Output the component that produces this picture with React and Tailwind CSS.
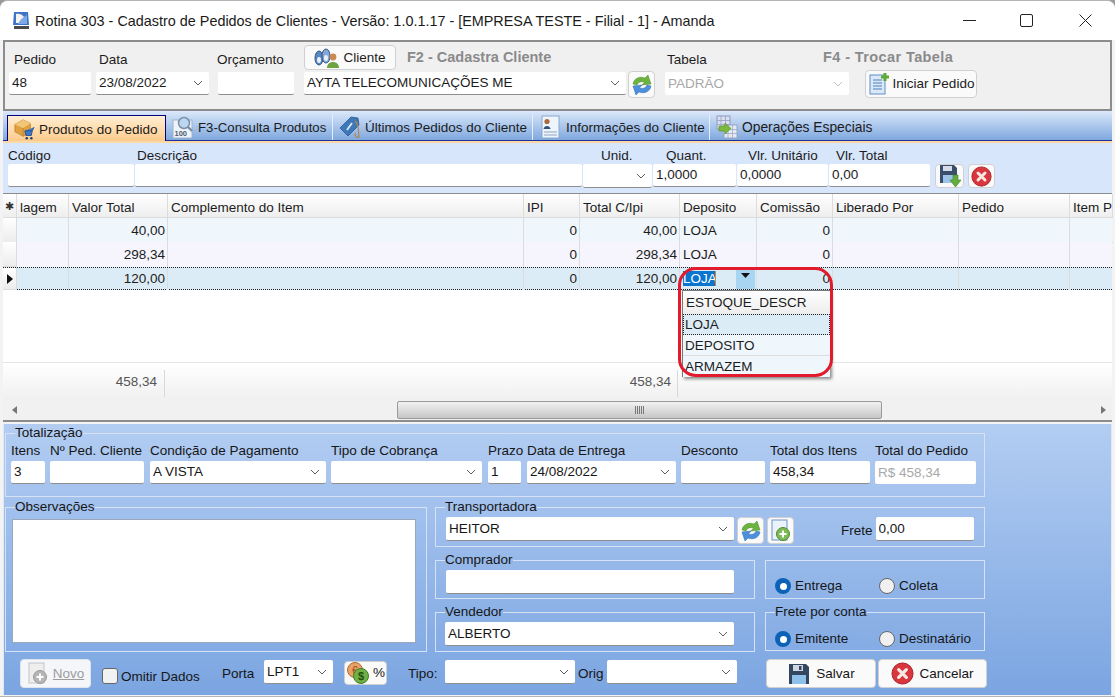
import React from "react";

const Chevron = ({ color = "#5f5f5f" }) => (
  <svg width="10" height="6" viewBox="0 0 10 6" className="shrink-0">
    <path d="M1 1 L5 5 L9 1" fill="none" stroke={color} strokeWidth="1" />
  </svg>
);

const Refresh = ({ size = 24 }) => (
  <svg width={size} height={size} viewBox="0 0 24 24">
    <path d="M3 11 C4 5 10 3 15 5 L18 2 L21 11 L12 12 L14.5 9 C11 8 8 9 7 12 Z" fill="#6db33f" stroke="#4b8a2a" strokeWidth=".5" />
    <path d="M21 13 C20 19 14 21 9 19 L6 22 L3 13 L12 12 L9.5 15 C13 16 16 15 17 12 Z" fill="#4c8fdc" stroke="#2e69ad" strokeWidth=".5" />
  </svg>
);

const RedX = ({ size = 22 }) => (
  <svg width={size} height={size} viewBox="0 0 24 24">
    <circle cx="12" cy="12" r="11" fill="#d9363e" stroke="#a51f27" strokeWidth="1" />
    <path d="M8 8 L16 16 M16 8 L8 16" stroke="#f6e9e4" strokeWidth="3.4" strokeLinecap="round" />
  </svg>
);

const Floppy = ({ size = 24 }) => (
  <svg width={size} height={size} viewBox="0 0 24 24">
    <path d="M2 2 H19 L22 5 V22 H2 Z" fill="#33475e" />
    <rect x="6" y="3" width="10" height="6" fill="#cfd8e2" />
    <rect x="12" y="4" width="2.5" height="4" fill="#33475e" />
    <rect x="5" y="13" width="14" height="9" fill="#8fc0ea" />
  </svg>
);

const SaveGreen = () => (
  <svg width="24" height="24" viewBox="0 0 24 24">
    <path d="M2 1 H16 L19 4 V19 H2 Z" fill="#3a4f6c" />
    <rect x="5" y="2" width="9" height="5" fill="#d6dde6" />
    <rect x="5" y="11" width="10" height="8" fill="#9cc4e8" />
    <path d="M15 11 H20 V16 H23 L17.5 23 L12 16 H15 Z" fill="#63ad3c" stroke="#3f7f22" strokeWidth=".6" />
  </svg>
);

const DocPlus = ({ muted }) => (
  <svg width="22" height="24" viewBox="0 0 22 24">
    <rect x="2" y="1" width="15" height="20" fill={muted ? "#eeeeee" : "#eaf2fb"} stroke={muted ? "#c4c4c4" : "#6f94c4"} />
    <circle cx="13" cy="15" r="6.5" fill={muted ? "#b5b5b5" : "#7dbb55"} stroke={muted ? "#9a9a9a" : "#4f8a2f"} />
    <path d="M13 11.5 V18.5 M9.5 15 H16.5" stroke="#ffffff" strokeWidth="2" />
  </svg>
);

const PageAdd = () => (
  <svg width="24" height="24" viewBox="0 0 24 24">
    <rect x="2" y="3" width="15" height="19" fill="#dbe8f8" stroke="#5f8cc6" />
    <path d="M5 8 H14 M5 11 H14 M5 14 H14 M5 17 H14" stroke="#4f7fb9" strokeWidth="1.2" />
    <path d="M17 1 V9 M13 5 H21" stroke="#5cab35" strokeWidth="3" />
  </svg>
);

const BoxCart = () => (
  <svg width="22" height="24" viewBox="0 0 24 24">
    <path d="M2 7 L11 2 L19 6 V15 L11 20 L2 15 Z" fill="#e0a040" stroke="#a8701f" strokeWidth=".6" />
    <path d="M2 7 L11 11 L19 6 L11 2 Z" fill="#f2c778" />
    <path d="M11 11 V20" stroke="#a8701f" strokeWidth=".6" />
    <path d="M13 14 H21 L23 10 M13 14 L14 19 H20 L21 14" fill="#3f78c4" stroke="#1f4f94" strokeWidth="1" />
    <circle cx="15" cy="22" r="1.4" fill="#1f3f6f" />
    <circle cx="20" cy="22" r="1.4" fill="#1f3f6f" />
  </svg>
);

const Search100 = () => (
  <svg width="22" height="24" viewBox="0 0 22 24">
    <rect x="1" y="5" width="19" height="18" fill="#eef3fa" stroke="#9fb2cc" />
    <circle cx="12" cy="8" r="5.5" fill="#bcd6f2" stroke="#7a8ea8" strokeWidth="1.5" />
    <path d="M16 12 L20 16" stroke="#7a8ea8" strokeWidth="2.4" />
    <text x="2.5" y="21" fontSize="7.5" fontWeight="700" fill="#4e5d70" fontFamily="Liberation Sans, sans-serif">100</text>
  </svg>
);

const PriceTag = () => (
  <svg width="22" height="24" viewBox="0 0 22 24">
    <path d="M1 13 L12 2 L19 3 L20 10 L9 21 Z" fill="#3f78b8" stroke="#234f82" strokeWidth=".7" />
    <path d="M8 15 L13 8" stroke="#dce9f7" strokeWidth="1.8" />
    <path d="M16 6 C21 10 19 18 20 22 C18 23 16 22 16 18" fill="none" stroke="#b7854c" strokeWidth="1.2" />
  </svg>
);

const PersonCard = () => (
  <svg width="19" height="24" viewBox="0 0 19 24">
    <rect x="1" y="1" width="17" height="22" fill="#eef4fb" stroke="#8aa8cc" />
    <circle cx="6" cy="6.5" r="2.6" fill="#a86a3c" />
    <path d="M2.5 14 C3 10 9 10 9.5 14 Z" fill="#33507a" />
    <path d="M3 17 H16 M3 20 H16" stroke="#8ca6c4" strokeWidth="1.2" />
  </svg>
);

const GridArrow = () => (
  <svg width="22" height="24" viewBox="0 0 22 24">
    <rect x="1" y="1" width="13" height="13" fill="#d9dfec" stroke="#8b9ac0" />
    <path d="M5 1 V14 M9.5 1 V14 M1 5.5 H14 M1 9.5 H14" stroke="#8b9ac0" strokeWidth=".7" />
    <rect x="8" y="10" width="13" height="13" fill="#e4e9f2" stroke="#98a6c4" />
    <path d="M12 10 V23 M16.5 10 V23 M8 14.5 H21 M8 18.5 H21" stroke="#98a6c4" strokeWidth=".7" />
    <path d="M3 11 H9 V8 L15 13.5 L9 19 V16 H3 Z" fill="#7cba3f" stroke="#558a24" strokeWidth=".6" />
  </svg>
);

const Binoculars = () => (
  <svg width="26" height="22" viewBox="0 0 26 22">
    <ellipse cx="5" cy="11" rx="4" ry="7" fill="#5b87c0" stroke="#2f5688" />
    <ellipse cx="12" cy="9" rx="4" ry="7" fill="#84a9d6" stroke="#2f5688" />
    <ellipse cx="5" cy="13" rx="2" ry="3" fill="#e8f0fa" />
    <ellipse cx="12" cy="11" rx="2" ry="3" fill="#e8f0fa" />
    <circle cx="19" cy="10" r="3.4" fill="#c98a55" />
    <path d="M13 21 C13 13 25 13 25 21 Z" fill="#6da341" />
  </svg>
);

const Coins = () => (
  <svg width="24" height="24" viewBox="0 0 24 24">
    <circle cx="9" cy="9" r="7.5" fill="#e6a26a" stroke="#b26a30" />
    <text x="6" y="12.5" fontSize="10" fill="#9a4d18" fontFamily="Liberation Sans, sans-serif">€</text>
    <circle cx="15" cy="15" r="7.5" fill="#70b044" stroke="#3f7f22" />
    <text x="12" y="19" fontSize="11" fontWeight="700" fill="#20500f" fontFamily="Liberation Sans, sans-serif">$</text>
  </svg>
);

const Box = ({ className = "", value, chevron, muted }) => (
  <div className={`flex items-center bg-white border-b border-[#8e8e8e] rounded-[2px] pl-[3px] pr-[6px] shrink-0 ${className}`}>
    <span className={`flex-1 whitespace-nowrap overflow-hidden ${muted ? "text-[#a8a8a8]" : ""}`}>{value}</span>
    {chevron && <Chevron color={muted ? "#c0c0c0" : "#5f5f5f"} />}
  </div>
);

const IconButton = ({ className = "", children }) => (
  <div className={`flex items-center justify-center bg-[#fafafa] border border-[#d0d0d0] rounded-[4px] shrink-0 ${className}`}>
    {children}
  </div>
);

const Legend = ({ children }) => <legend className="ml-[9px] leading-[16px]">{children}</legend>;

const Radio = ({ className = "", label, checked }) => (
  <div className={`flex items-center gap-[4px] ${className}`}>
    {checked ? (
      <span className="w-[16px] h-[16px] rounded-full bg-[#0b62b6] flex items-center justify-center">
        <span className="w-[7px] h-[7px] rounded-full bg-white" />
      </span>
    ) : (
      <span className="w-[16px] h-[16px] rounded-full bg-[#f0f0f0] border border-[#666666]" />
    )}
    <span>{label}</span>
  </div>
);

const Col = ({ className = "", label, children }) => (
  <div className={`flex flex-col shrink-0 ${className}`}>
    <span className="leading-[16px] h-[18px] whitespace-nowrap">{label}</span>
    {children}
  </div>
);

const Tab = ({ className = "", icon, label }) => (
  <div className={`flex items-center h-[26px] border-r border-[#e4eefb] shrink-0 whitespace-nowrap ${className}`}>
    {icon}
    <span className="mt-[2px]">{label}</span>
  </div>
);

const headers = ["lagem", "Valor Total", "Complemento do Item", "IPI", "Total C/Ipi", "Deposito", "Comissão", "Liberado Por", "Pedido", "Item Pe"];
const gridCols = "grid grid-cols-[14px_52px_99px_356px_56px_100px_77px_76px_126px_111px_43px]";

const Row = ({ className = "", total, withIpi, cellBorder = "border-b border-[#dcdcdc]", marker, editing, pad = "" }) => {
  const cell = `border-r border-[#dcdcdc] ${cellBorder} ${pad}`;
  return (
    <div className={`${gridCols} ${className}`}>
      <div className="flex items-center justify-center bg-gradient-to-b from-white to-[#ececec] border-r border-b border-[#dcdcdc]">{marker}</div>
      <div className={cell} />
      <div className={`${cell} text-right pr-[2px]`}>{total}</div>
      <div className={cell} />
      <div className={`${cell} text-right pr-[2px]`}>0</div>
      <div className={`${cell} text-right pr-[2px]`}>{withIpi}</div>
      {editing ? (
        <div className={`${cell} flex items-start pl-[3px] relative`}>
          <span className="bg-[#0a74cf] text-white border-r border-[#e8821e] mt-[3px] leading-[15px] w-[33px] overflow-hidden">LOJA</span>
          <span className="absolute right-[1px] top-0 w-[19px] h-[21px] bg-[#a8d6f2] flex items-center justify-center pb-[6px]">
            <svg width="9" height="5" viewBox="0 0 9 5"><path d="M0 0 H9 L4.5 5 Z" fill="#111111" /></svg>
          </span>
        </div>
      ) : (
        <div className={`${cell} pl-[3px]`}>LOJA</div>
      )}
      <div className={`${cell} text-right pr-[2px]`}>0</div>
      <div className={cell} />
      <div className={cell} />
      <div className={cellBorder} />
    </div>
  );
};

export default function App() {
  return (
    <div className="w-[1115px] h-[697px] overflow-hidden bg-[#9a9a9a] text-[#1c1c1c] text-[13.5px] leading-[22px] font-['Liberation_Sans',sans-serif]">
      <div className="h-full flex flex-col bg-[#f3f3f3] rounded-t-[8px] border-t border-b border-[#b5b5b5]">
        {/* title bar */}
        <div className="h-[39px] shrink-0 flex items-center bg-white rounded-t-[8px] pl-[11px] text-[14.4px] text-[#1a1a1a]">
          <svg width="20" height="21" viewBox="0 0 20 21" className="shrink-0">
            <path d="M3 2 H17 L18 15 H2 Z" fill="#3f74c8" />
            <path d="M5 4 C10 3 14 6 15 13 H5 Z" fill="#f4f4ee" />
            <path d="M7 14 C10 8 13 7 16 5 V14 Z" fill="#7fa8e4" />
            <rect x="3" y="16" width="15" height="3" fill="#4a4a4a" />
          </svg>
          <span className="ml-[4px] whitespace-nowrap">Rotina 303 - Cadastro de Pedidos de Clientes - Versão: 1.0.1.17 - [EMPRESA TESTE - Filial - 1] - Amanda</span>
          <div className="ml-auto flex items-center">
            <svg width="13" height="13" viewBox="0 0 13 13"><path d="M0 6.5 H13" stroke="#222222" /></svg>
            <svg width="13" height="13" viewBox="0 0 13 13" className="ml-[44px]"><rect x=".5" y=".5" width="12" height="12" rx="1.5" fill="none" stroke="#222222" /></svg>
            <svg width="13" height="13" viewBox="0 0 13 13" className="ml-[46px] mr-[23px]"><path d="M.5 .5 L12.5 12.5 M12.5 .5 L.5 12.5" stroke="#222222" /></svg>
          </div>
        </div>

        <div className="flex-1 flex flex-col mx-[3px] min-h-0">
          {/* header */}
          <div className="h-[71px] shrink-0 border-2 border-[#8c8c8c] bg-[#f0f0f0]">
            <div className="h-[28px] flex items-start pl-[9px] pt-[3px]">
              <span className="w-[85px] mt-[7px] leading-[16px]">Pedido</span>
              <span className="w-[118px] mt-[7px] leading-[16px]">Data</span>
              <span className="w-[87px] mt-[7px] leading-[16px]">Orçamento</span>
              <IconButton className="w-[92px] h-[25px] gap-[3px]"><Binoculars /><span>Cliente</span></IconButton>
              <span className="ml-[11px] w-[260px] mt-[4px] leading-[16px] text-[14.5px] font-bold text-[#8a8a8a] whitespace-nowrap">F2 - Cadastra Cliente</span>
              <span className="w-[156px] mt-[7px] leading-[16px]">Tabela</span>
              <span className="mt-[4px] leading-[16px] text-[14.5px] tracking-[0.4px] font-bold text-[#8a8a8a] whitespace-nowrap">F4 - Trocar Tabela</span>
            </div>
            <div className="flex items-start pl-[4px]">
              <Box className="w-[82px] h-[23px] mt-[2px]" value="48" />
              <Box className="w-[113px] h-[23px] mt-[2px] ml-[5px]" value="23/08/2022" chevron />
              <Box className="w-[76px] h-[23px] mt-[2px] ml-[9px]" />
              <Box className="w-[322px] h-[23px] mt-[2px] ml-[10px] pl-[1px]" value="AYTA TELECOMUNICAÇÕES ME" chevron />
              <IconButton className="w-[27px] h-[27px] mt-[1px] ml-[2px]"><Refresh /></IconButton>
              <Box className="w-[184px] h-[23px] mt-[2px] ml-[10px] border-b-0 bg-[#f8f8f8]" value="PADRÃO" chevron muted />
              <IconButton className="w-[112px] h-[28px] ml-[16px] gap-[1px]"><PageAdd /><span>Iniciar Pedido</span></IconButton>
            </div>
          </div>

          {/* tabs */}
          <div className="h-[32px] shrink-0 flex flex-col">
            <div className="h-[30px] shrink-0 flex items-end bg-gradient-to-b from-[#dbe8fa] to-[#7fa8de] border-b border-[#1c2f9c]">
              <div className="flex items-center gap-[4px] ml-[4px] w-[159px] h-[26px] -mb-[1px] pl-[5px] bg-gradient-to-b from-[#ffeed2] to-[#fdcb8b] border border-b-0 border-[#000080] shrink-0 whitespace-nowrap">
                <BoxCart />
                <span className="mt-[2px]">Produtos do Pedido</span>
              </div>
              <Tab className="w-[167px] pl-[6px] gap-[4px] text-[13.2px]" icon={<Search100 />} label="F3-Consulta Produtos" />
              <Tab className="w-[200px] pl-[6px] gap-[4px]" icon={<PriceTag />} label="Últimos Pedidos do Cliente" />
              <Tab className="w-[177px] pl-[8px] gap-[6px]" icon={<PersonCard />} label="Informações do Cliente" />
              <Tab className="pl-[6px] gap-[4px] border-r-0 text-[13.8px]" icon={<GridArrow />} label="Operações Especiais" />
            </div>
            <div className="h-[2px] bg-[#fbd9a4]" />
          </div>

          {/* item entry */}
          <div className="h-[51px] shrink-0 bg-[#d7e6fb] border-b border-[#8c8c8c]">
            <div className="h-[21px] flex items-end pl-[5px] leading-[16px]">
              <span className="w-[129px]">Código</span>
              <span className="w-[464px]">Descrição</span>
              <span className="w-[65px]">Unid.</span>
              <span className="w-[82px]">Quant.</span>
              <span className="w-[88px]">Vlr. Unitário</span>
              <span>Vlr. Total</span>
            </div>
            <div className="flex items-start pl-[5px]">
              <Box className="w-[126px] h-[23px]" />
              <Box className="w-[447px] h-[23px] ml-[1px]" />
              <Box className="w-[69px] h-[24px] ml-[1px]" chevron />
              <Box className="w-[83px] h-[23px] ml-[1px]" value="1,0000" />
              <Box className="w-[91px] h-[23px] ml-[1px]" value="0,0000" />
              <Box className="w-[101px] h-[23px] ml-[1px]" value="0,00" />
              <IconButton className="w-[29px] h-[24px] ml-[5px]"><SaveGreen /></IconButton>
              <IconButton className="w-[27px] h-[24px] ml-[4px]"><RedX size={21} /></IconButton>
            </div>
          </div>

          {/* grid */}
          <div className="h-[228px] shrink-0 flex flex-col bg-white border-b-2 border-[#8c8c8c] relative">
            <div className={`${gridCols} h-[24px] bg-gradient-to-b from-white to-[#ededed]`}>
              <div className="flex items-center justify-center border-r border-b border-[#dcdcdc] text-[#333333] text-[11px]">✱</div>
              {headers.map((h, i) => (
                <div key={i} className="pl-[3px] pt-[3px] border-r border-b border-[#dcdcdc] whitespace-nowrap overflow-hidden">{h}</div>
              ))}
            </div>
            <Row className="h-[24px] bg-[#eff7fd]" total="40,00" withIpi="40,00" pad="pt-[2px]" />
            <Row className="h-[25px] bg-[#f6f4fc]" total="298,34" withIpi="298,34" cellBorder="" pad="pt-[2px]" />
            <Row
              className="h-[23px] bg-[#dcecf6] border-y border-dotted border-[#222222]"
              total="120,00"
              withIpi="120,00"
              cellBorder=""
              editing
              marker={<svg width="6" height="10" viewBox="0 0 6 10"><path d="M0 0 L6 5 L0 10 Z" fill="#111111" /></svg>}
            />
            <div className="h-[72px] shrink-0" />
            <div className="h-[38px] shrink-0 flex border-t border-[#e6e6e6] bg-gradient-to-b from-white to-[#f0f0f0] text-[#555555] pt-[7px] pb-[3px] leading-[24px]">
              <div className="w-[162px] text-right pr-[7px] border-r border-[#d8d8d8]">458,34</div>
              <div className="w-[513px] text-right pr-[6px] border-r border-[#d8d8d8]">458,34</div>
            </div>
            <div className="h-[20px] shrink-0 flex items-center bg-[#f1f1f1]">
              <svg width="5" height="8" viewBox="0 0 5 8" className="ml-[9px]"><path d="M5 0 V8 L0 4 Z" fill="#777777" /></svg>
              <div className="ml-[380px] w-[485px] h-[18px] rounded-[2px] border border-[#9a9a9a] bg-gradient-to-b from-[#f2f2f2] to-[#c6c6c6] flex items-center justify-center">
                <svg width="9" height="8" viewBox="0 0 9 8"><path d="M.5 0 V8 M2.5 0 V8 M4.5 0 V8 M6.5 0 V8 M8.5 0 V8" stroke="#777777" /></svg>
              </div>
              <svg width="5" height="8" viewBox="0 0 5 8" className="ml-[219px]"><path d="M0 0 V8 L5 4 Z" fill="#777777" /></svg>
            </div>

            {/* dropdown of the Deposito cell */}
            <div className="absolute left-[679px] top-[96px] w-[148px] h-[87px] bg-white border-t border-l border-[#777777] shadow-[2px_2px_3px_rgba(0,0,0,0.45)]">
              <div className="h-[23px] pl-[3px] bg-gradient-to-b from-white to-[#ededed] leading-[24px]">ESTOQUE_DESCR</div>
              <div className="h-[21px] pl-[1px] bg-[#dcecf6] border border-dotted border-[#222222] leading-[20px]">LOJA</div>
              <div className="h-[21px] pl-[2px] bg-[#eff7fd] border-b border-[#dcdcdc] leading-[21px]">DEPOSITO</div>
              <div className="h-[21px] pl-[2px] bg-[#eff7fd] leading-[21px]">ARMAZEM</div>
            </div>
            <div className="absolute left-[675px] top-[73px] w-[155px] h-[110px] rounded-[18px] border-[3px] border-[#e11b2c]" />
          </div>

          {/* totals */}
          <div className="mt-[2px] h-[271px] shrink-0 bg-gradient-to-b from-[#b3cdf2] to-[#7ba5e1] pl-[1px] border-x border-[#dfe8f5] text-[#161616] leading-[16px]">
            <fieldset className="mt-[1px] w-[980px] h-[72px] border border-[#d6e2f4]">
              <Legend>Totalização</Legend>
              <div className="flex pl-[5px] pt-[2px]">
                <Col className="w-[34px]" label="Itens"><Box className="w-[34px] h-[23px]" value="3" /></Col>
                <Col className="w-[94px] ml-[5px]" label="Nº Ped. Cliente"><Box className="w-[94px] h-[23px]" /></Col>
                <Col className="w-[176px] ml-[6px]" label="Condição de Pagamento"><Box className="w-[176px] h-[23px]" value="A VISTA" chevron /></Col>
                <Col className="w-[151px] ml-[5px]" label="Tipo de Cobrança"><Box className="w-[151px] h-[23px]" chevron /></Col>
                <Col className="w-[33px] ml-[6px]" label="Prazo"><Box className="w-[33px] h-[23px]" value="1" /></Col>
                <Col className="w-[149px] ml-[6px]" label="Data de Entrega"><Box className="w-[149px] h-[23px]" value="24/08/2022" chevron /></Col>
                <Col className="w-[84px] ml-[5px]" label="Desconto"><Box className="w-[84px] h-[23px]" /></Col>
                <Col className="w-[100px] ml-[5px]" label="Total dos Itens"><Box className="w-[100px] h-[23px]" value="458,34" /></Col>
                <Col className="w-[101px] ml-[5px]" label="Total do Pedido"><Box className="w-[101px] h-[23px] border-b-0 bg-[#f4f6f9]" value="R$ 458,34" muted /></Col>
              </div>
            </fieldset>

            <div className="flex mt-[2px]">
              <fieldset className="w-[422px] h-[153px] border border-[#d6e2f4]">
                <Legend>Observações</Legend>
                <div className="ml-[6px] mt-[4px] w-[404px] h-[124px] bg-white border border-[#9aa8ba]" />
              </fieldset>

              <div className="ml-[8px] w-[550px] flex flex-col">
                <fieldset className="w-[550px] h-[48px] border border-[#d6e2f4]">
                  <Legend>Transportadora</Legend>
                  <div className="flex items-start pl-[10px] mt-[2px]">
                    <Box className="w-[288px] h-[24px]" value="HEITOR" chevron />
                    <IconButton className="w-[27px] h-[27px] ml-[3px]"><Refresh /></IconButton>
                    <IconButton className="w-[27px] h-[27px] ml-[3px]"><DocPlus /></IconButton>
                    <span className="ml-[47px] mt-[6px]">Frete</span>
                    <Box className="w-[98px] h-[24px] ml-[3px]" value="0,00" />
                  </div>
                </fieldset>

                <div className="flex mt-[5px]">
                  <fieldset className="w-[320px] h-[47px] border border-[#d6e2f4]">
                    <Legend>Comprador</Legend>
                    <Box className="w-[288px] h-[24px] ml-[10px] mt-[2px]" />
                  </fieldset>
                  <div className="ml-[10px] mt-[8px] w-[220px] h-[39px] border border-[#d6e2f4] flex items-end pl-[9px] pb-[4px]">
                    <Radio className="w-[104px]" label="Entrega" checked />
                    <Radio label="Coleta" />
                  </div>
                </div>

                <div className="flex mt-[5px]">
                  <fieldset className="w-[320px] h-[48px] border border-[#d6e2f4]">
                    <Legend>Vendedor</Legend>
                    <Box className="w-[289px] h-[24px] ml-[9px] mt-[2px]" value="ALBERTO" chevron />
                  </fieldset>
                  <fieldset className="ml-[10px] w-[220px] h-[47px] border border-[#d6e2f4]">
                    <Legend>Frete por conta</Legend>
                    <div className="flex pl-[9px] pt-[11px]">
                      <Radio className="w-[104px]" label="Emitente" checked />
                      <Radio label="Destinatário" />
                    </div>
                  </fieldset>
                </div>
              </div>
            </div>

            <div className="flex items-start mt-[7px]">
              <div className="ml-[15px] w-[71px] h-[29px] flex items-center justify-center gap-[4px] bg-[#f4f6fa] border border-[#dfe4ec] rounded-[4px] shrink-0">
                <DocPlus muted />
                <span className="text-[#9c9c9c] underline decoration-[#9c9c9c]">Novo</span>
              </div>
              <div className="ml-[11px] mt-[9px] w-[16px] h-[16px] bg-[#f2f2f2] border border-[#666666] rounded-[3px] shrink-0" />
              <span className="ml-[3px] w-[78px] mt-[10px] whitespace-nowrap">Omitir Dados</span>
              <span className="ml-[23px] w-[33px] mt-[7px]">Porta</span>
              <Box className="w-[69px] h-[24px] ml-[9px] mt-[1px]" value="LPT1" chevron />
              <IconButton className="w-[43px] h-[24px] ml-[11px] mt-[2px] gap-[3px]"><Coins /><span>%</span></IconButton>
              <span className="ml-[21px] w-[31px] mt-[7px]">Tipo:</span>
              <Box className="w-[130px] h-[24px] ml-[6px] mt-[1px]" chevron />
              <span className="ml-[3px] w-[25px] mt-[7px]">Orig</span>
              <Box className="w-[130px] h-[24px] ml-[4px] mt-[1px]" chevron />
              <IconButton className="w-[110px] h-[29px] ml-[29px] gap-[5px]"><Floppy size={24} /><span>Salvar</span></IconButton>
              <IconButton className="w-[109px] h-[29px] ml-[2px] gap-[5px]"><RedX size={23} /><span>Cancelar</span></IconButton>
            </div>
          </div>
        </div>
      </div>
    </div>
  );
}
